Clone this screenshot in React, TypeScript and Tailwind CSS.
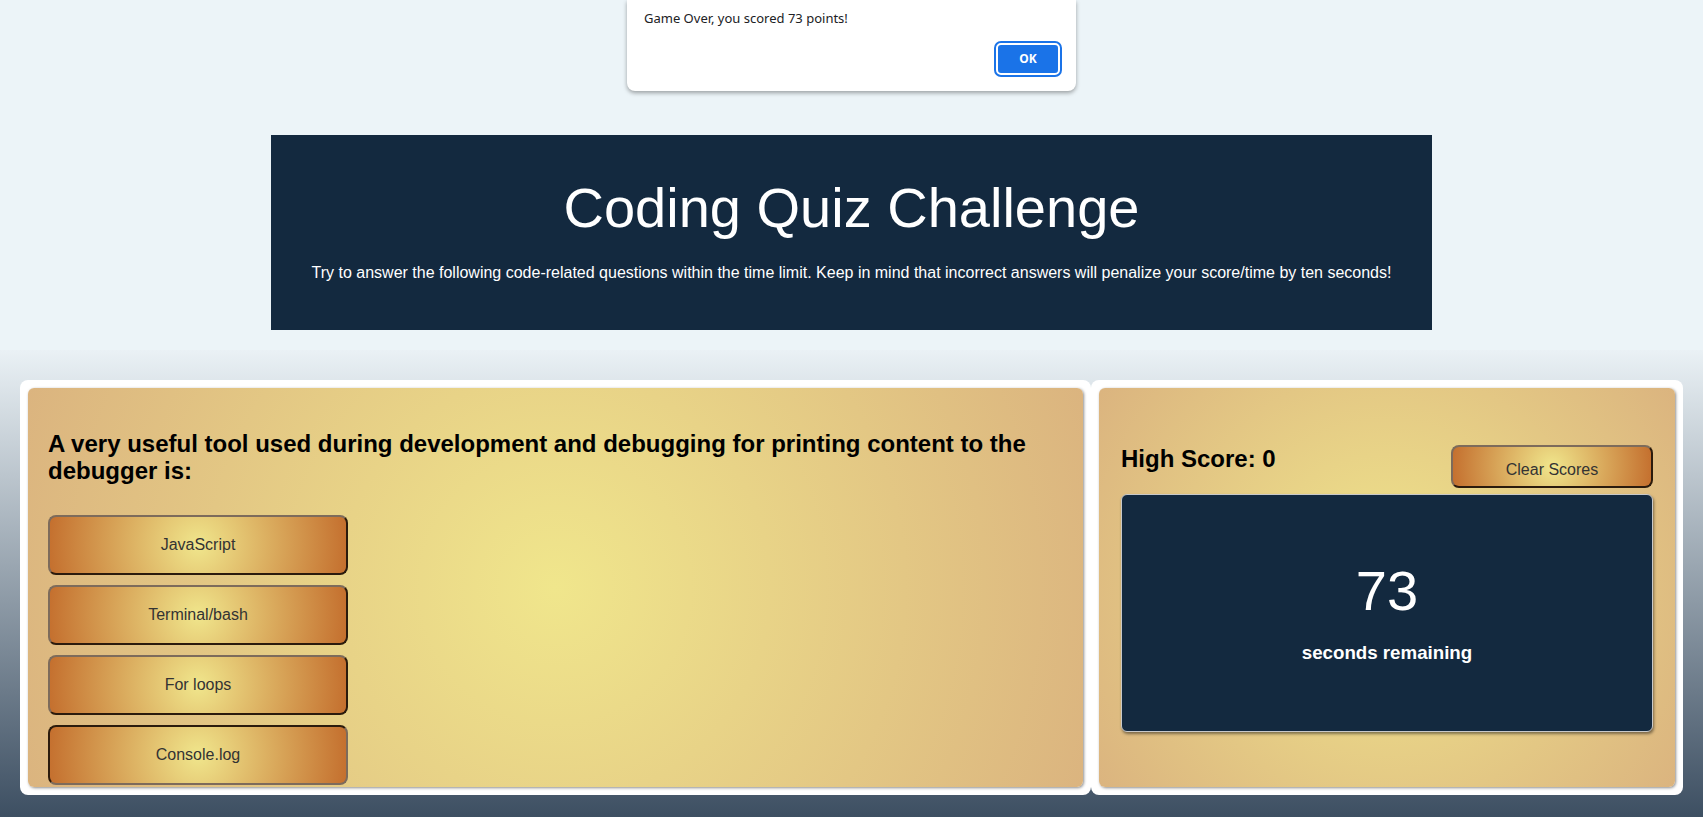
import React, { FC } from 'react';

const answers = ['JavaScript', 'Terminal/bash', 'For loops', 'Console.log'];

// copper button with the khaki glow in the middle
const AnswerButton: FC<{ label: string; pressed?: boolean }> = ({ label, pressed }) => (
  <button
    className={
      'w-[300px] h-[60px] rounded-lg border-2 border-solid text-base text-[#333] bg-[radial-gradient(circle,#f0e68c_0%,#c46f2e_100%)] ' +
      (pressed
        ? 'border-t-[#2b1b0d] border-l-[#2b1b0d] border-b-[#7d6b5b] border-r-[#7d6b5b]'
        : 'border-t-[#7d6b5b] border-l-[#7d6b5b] border-b-[#2b1b0d] border-r-[#2b1b0d]')
    }
  >
    {label}
  </button>
);

const App: FC = () => {
  return (
    <div className="relative w-full min-h-screen flex flex-col font-['Liberation_Sans',Arial,sans-serif]">
      {/* alert left over from the game */}
      <div className="absolute top-0 left-[627px] w-[449px] h-[91px] bg-white rounded-b-lg shadow-[0_2px_4px_rgba(0,0,0,0.35)] z-10 font-['Noto_Sans',sans-serif]">
        <p className="absolute left-[17px] top-[9px] text-[13px] text-[#202124]">Game Over, you scored 73 points!</p>
        <button className="absolute left-[369px] top-[43px] w-[64px] h-[32px] rounded-[5px] bg-[#1a73e8] text-white text-[12px] font-bold border-2 border-white outline-2 outline-[#1a73e8] outline-offset-0">
          OK
        </button>
      </div>

      <div className="bg-[#ecf4f8] pt-[135px] pb-[20px]">
        <header className="w-[1161px] h-[195px] mx-auto bg-[#13293f] text-white text-center pt-[41px]">
          <h1 className="text-[56px] leading-[64px]">Coding Quiz Challenge</h1>
          <p className="mt-[24px] text-base leading-[18px]">
            Try to answer the following code-related questions within the time limit. Keep in mind that incorrect answers will penalize your score/time by ten seconds!
          </p>
        </header>
      </div>

      <main className="flex-1 flex px-[20px] pt-[30px] pb-[22px] bg-[linear-gradient(to_bottom,#eaf1f5,#3d4f62)]">
        <section className="w-[1071px] h-[415px] bg-white rounded-lg p-2">
          <div className="h-full rounded-md bg-[radial-gradient(circle,#f0e68c_0%,#dbb47f_100%)] shadow-[1px_1px_3px_rgba(0,0,0,0.45)] pl-[20px] pr-[20px] pt-[42px]">
            <h2 className="text-2xl leading-[27px] font-bold text-black">
              A very useful tool used during development and debugging for printing content to the debugger is:
            </h2>
            <div className="flex flex-col gap-[10px] mt-[31px]">
              {answers.map((a, i) => (
                <AnswerButton key={a} label={a} pressed={i === 3} />
              ))}
            </div>
          </div>
        </section>

        <section className="flex-1 h-[415px] bg-white rounded-lg p-2">
          <div className="h-full rounded-md bg-[radial-gradient(circle,#f0e68c_0%,#dbb47f_100%)] shadow-[1px_1px_3px_rgba(0,0,0,0.45)] pl-[22px] pr-[22px] pt-[57px]">
            <div className="flex justify-between items-start h-[43px]">
              <h2 className="text-2xl leading-[27px] font-bold text-black">High Score: 0</h2>
              <button className="w-[202px] h-[43px] pt-[6px] rounded-lg border-2 border-solid border-t-[#7d6b5b] border-l-[#7d6b5b] border-b-[#2b1b0d] border-r-[#2b1b0d] text-base text-[#333] bg-[radial-gradient(circle,#f0e68c_0%,#c46f2e_100%)]">
                Clear Scores
              </button>
            </div>
            <div className="mt-[6px] h-[238px] rounded-md bg-[#13293f] border border-[#c9c9c9] shadow-[1px_2px_3px_rgba(0,0,0,0.45)] text-white text-center pt-[64px]">
              <div className="text-[56px] leading-[64px]">73</div>
              <h3 className="mt-[19px] text-[18.72px] leading-[22px] font-bold">seconds remaining</h3>
            </div>
          </div>
        </section>
      </main>
    </div>
  );
};

export default App;
